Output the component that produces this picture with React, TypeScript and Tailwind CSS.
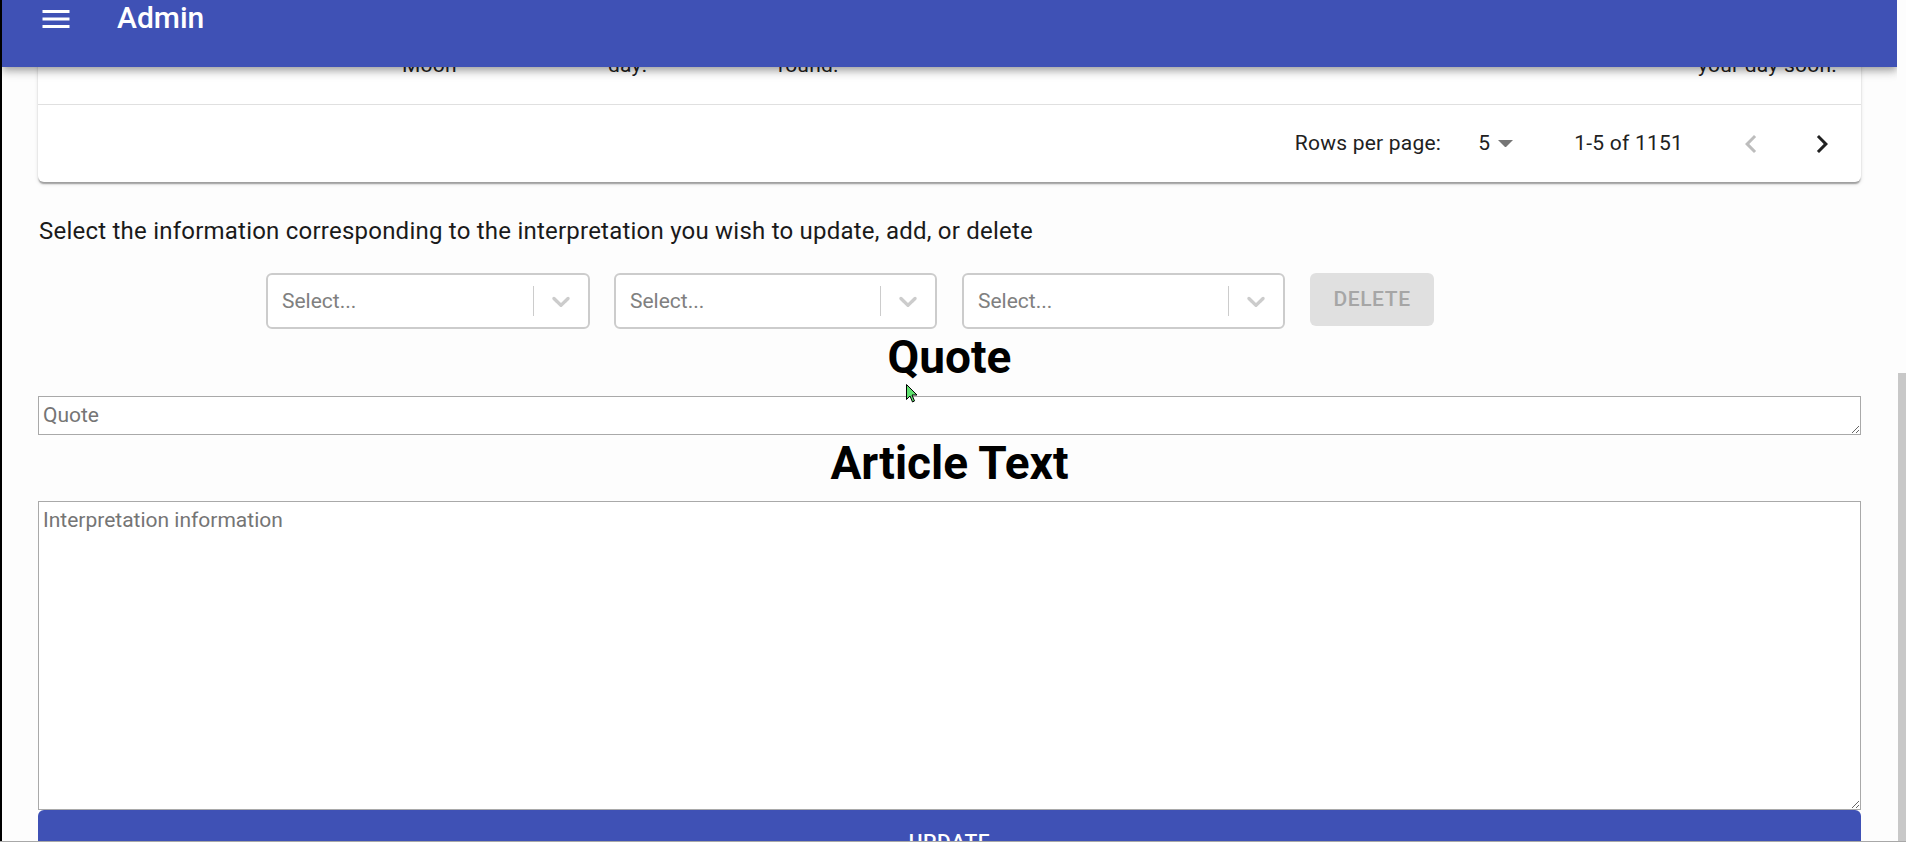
import React from "react";

function SelectBox({ className }: { className: string }) {
  return (
    <div
      className={
        "h-[56px] shrink-0 border-2 border-[#cccccc] rounded-[6px] bg-white flex items-center " +
        className
      }
    >
      <span className="flex-1 pl-[14px] text-[21px] text-[#808080] leading-[28px]">Select...</span>
      <div className="w-px h-[30px] bg-[#cccccc]" />
      <div className="w-[54px] h-full flex items-center justify-center">
        <svg viewBox="0 0 20 20" className="w-[30px] h-[30px]" fill="#cccccc">
          <path d="M4.516 7.548c0.436-0.446 1.043-0.481 1.576 0l3.908 3.747 3.908-3.747c0.533-0.481 1.141-0.446 1.574 0 0.436 0.445 0.408 1.197 0 1.615-0.406 0.418-4.695 4.502-4.695 4.502-0.217 0.223-0.502 0.335-0.787 0.335s-0.57-0.112-0.789-0.335c0 0-4.287-4.084-4.695-4.502s-0.436-1.17 0-1.615z" />
        </svg>
      </div>
    </div>
  );
}

export default function App() {
  return (
    <div className="relative w-[1906px] h-[842px] overflow-hidden flex bg-[#fdfdfd] [font-family:Roboto,sans-serif] border-b border-[#a8a8a8]">
      <div className="w-[2px] shrink-0 bg-black" />
      <div className="relative flex-1 flex flex-col overflow-hidden">
        <header className="absolute top-0 left-0 right-0 z-10 h-[67px] bg-[#3f51b5] shadow-[0_3px_6px_-1.5px_rgba(0,0,0,0.2),0_6px_7.5px_0_rgba(0,0,0,0.14),0_1.5px_15px_0_rgba(0,0,0,0.12)]">
          <div className="h-[38px] flex items-center pl-[36px]">
            <svg viewBox="0 0 24 24" className="w-[36px] h-[36px]" fill="#ffffff">
              <path d="M3 18h18v-2H3v2zm0-5h18v-2H3v2zm0-7v2h18V6H3z" />
            </svg>
            <span className="ml-[43px] text-[30px] font-medium text-white leading-[36px] -mt-[2px]">
              Admin
            </span>
          </div>
        </header>

        <div className="mx-[36px] shrink-0 bg-white rounded-b-[6px] shadow-[0_3px_1.5px_-1.5px_rgba(0,0,0,0.2),0_1.5px_1.5px_0_rgba(0,0,0,0.14),0_1.5px_4.5px_0_rgba(0,0,0,0.12)]">
          <div className="h-[104px] flex items-end text-[21px] leading-[30px] text-[#212121] tracking-[0.225px]">
            <div className="flex w-full pb-[24px]">
              <div className="w-[340px] shrink-0" />
              <div className="w-[206px] shrink-0 pl-[24px]">Moon</div>
              <div className="w-[170px] shrink-0 pl-[24px]">day:</div>
              <div className="flex-1 pl-[24px]">round.</div>
              <div className="pr-[24px] text-right">your day soon.</div>
            </div>
          </div>
          <div className="h-[78px] border-t border-[#e0e0e0] flex items-center justify-end pr-[21px] text-[21px] text-[#212121] tracking-[0.225px]">
            <span>Rows per page:</span>
            <span className="ml-[37px]">5</span>
            <svg viewBox="7 10 10 5" className="ml-[8px] w-[15px] h-[7.5px]" fill="#757575">
              <path d="M7 10l5 5 5-5z" />
            </svg>
            <span className="ml-[61px]">1-5 of 1151</span>
            <svg viewBox="0 0 24 24" className="ml-[50px] w-[36px] h-[36px]" fill="#bdbdbd">
              <path d="M15.41 7.41L14 6l-6 6 6 6 1.41-1.41L10.83 12z" />
            </svg>
            <svg viewBox="0 0 24 24" className="ml-[35px] w-[36px] h-[36px]" fill="#212121">
              <path d="M10 6L8.59 7.41 13.17 12l-4.58 4.59L10 18l6-6z" />
            </svg>
          </div>
        </div>

        <p className="mt-[31px] ml-[37px] text-[24px] leading-[36px] tracking-[0.225px] text-[#1a1a1a]">
          Select the information corresponding to the interpretation you wish to update, add, or delete
        </p>

        <div className="mt-[24px] ml-[264px] flex items-start">
          <SelectBox className="w-[324px]" />
          <SelectBox className="ml-[24px] w-[323px]" />
          <SelectBox className="ml-[25px] w-[323px]" />
          <button className="ml-[25px] w-[124px] h-[53px] rounded-[6px] bg-[#e0e0e0] text-[#a6a6a6] text-[21px] font-medium tracking-[0.6px] flex items-center justify-center pt-[1px]">
            DELETE
          </button>
        </div>

        <div className="px-[36px] flex flex-col">
          <h1 className="text-center text-[46px] font-bold leading-[56px] text-black mb-[11px]">Quote</h1>
          <textarea
            placeholder="Quote"
            className="block w-full h-[39px] shrink-0 border border-[#a9a9a9] bg-white pl-[4px] pt-[6px] text-[21px] leading-[25px] placeholder:text-[#757575] outline-none"
          />
          <h1 className="text-center text-[46px] font-bold leading-[56px] text-black mb-[10px]">Article Text</h1>
          <textarea
            placeholder="Interpretation information"
            className="block w-full h-[309px] shrink-0 border border-[#a9a9a9] bg-white pl-[4px] pt-[6px] text-[21px] leading-[25px] placeholder:text-[#757575] outline-none"
          />
          <button className="block w-full h-[56px] shrink-0 rounded-[6px] bg-[#3f51b5] text-white text-[21px] font-medium tracking-[0.6px] pt-[9px] leading-[37px] text-center">
            UPDATE
          </button>
        </div>
      </div>
      <div className="w-[9px] shrink-0 bg-[#fdfdfd] flex flex-col">
        <div className="mt-[373px] ml-[1px] flex-1 bg-[#c8c8c8]" />
      </div>

      <svg
        viewBox="0 0 12 19"
        className="absolute left-[906px] top-[384px] w-[12px] h-[19px] z-20"
      >
        <path d="M0.5 0.5 L0.5 15.5 L4 12 L6.5 18 L8.5 17 L6 11 L11 11 Z" fill="#5ee06e" stroke="#000000" strokeWidth="1" />
      </svg>
    </div>
  );
}
